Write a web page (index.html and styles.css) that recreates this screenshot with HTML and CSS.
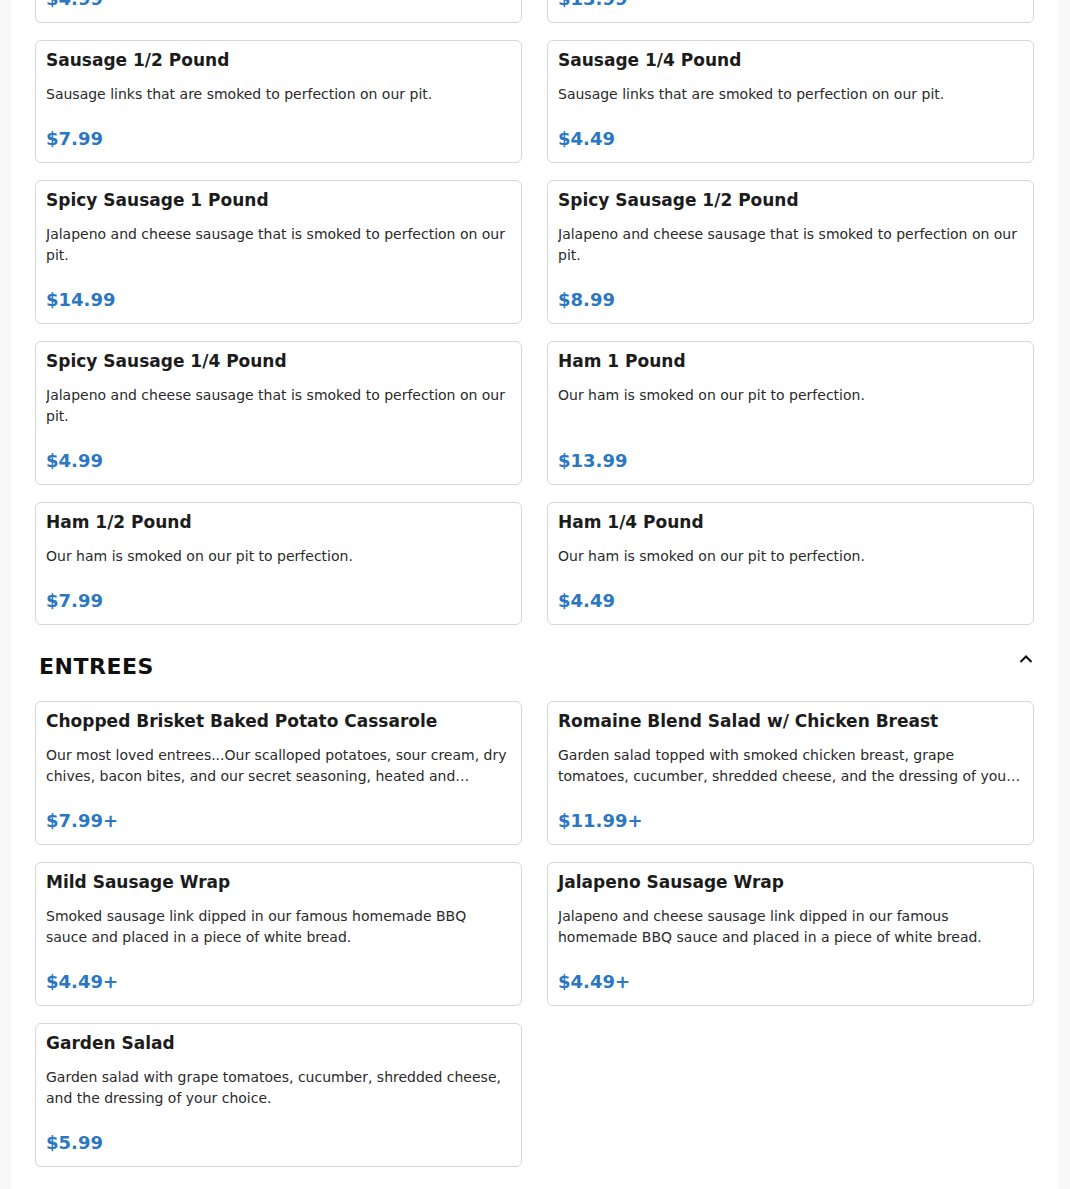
FILE: index.html
```html
<!DOCTYPE html>
<html lang="en">
<head>
<meta charset="utf-8">
<title>Menu</title>
<link rel="stylesheet" href="styles.css">
</head>
<body>
<main class="panel">
  <section class="section section-first">
    <div class="grid">
      <article class="card"><h3 class="card-title">Turkey 1/4 Pound</h3><p class="card-desc">Turkey breast smoked to perfection on our pit.</p><div class="card-price">$4.99</div></article>
      <article class="card"><h3 class="card-title">Sausage 1 Pound</h3><p class="card-desc">Sausage links that are smoked to perfection on our pit.</p><div class="card-price">$13.99</div></article>
      <article class="card"><h3 class="card-title">Sausage 1/2 Pound</h3><p class="card-desc">Sausage links that are smoked to perfection on our pit.</p><div class="card-price">$7.99</div></article>
      <article class="card"><h3 class="card-title">Sausage 1/4 Pound</h3><p class="card-desc">Sausage links that are smoked to perfection on our pit.</p><div class="card-price">$4.49</div></article>
      <article class="card"><h3 class="card-title">Spicy Sausage 1 Pound</h3><p class="card-desc">Jalapeno and cheese sausage that is smoked to perfection on our pit.</p><div class="card-price">$14.99</div></article>
      <article class="card"><h3 class="card-title">Spicy Sausage 1/2 Pound</h3><p class="card-desc">Jalapeno and cheese sausage that is smoked to perfection on our pit.</p><div class="card-price">$8.99</div></article>
      <article class="card"><h3 class="card-title">Spicy Sausage 1/4 Pound</h3><p class="card-desc">Jalapeno and cheese sausage that is smoked to perfection on our pit.</p><div class="card-price">$4.99</div></article>
      <article class="card"><h3 class="card-title">Ham 1 Pound</h3><p class="card-desc">Our ham is smoked on our pit to perfection.</p><div class="card-price">$13.99</div></article>
      <article class="card"><h3 class="card-title">Ham 1/2 Pound</h3><p class="card-desc">Our ham is smoked on our pit to perfection.</p><div class="card-price">$7.99</div></article>
      <article class="card"><h3 class="card-title">Ham 1/4 Pound</h3><p class="card-desc">Our ham is smoked on our pit to perfection.</p><div class="card-price">$4.49</div></article>
    </div>
  </section>

  <section class="section">
    <header class="section-head">
      <h2 class="section-title">ENTREES</h2>
      <svg class="chevron" width="14" height="10" viewBox="0 0 14 10" aria-hidden="true"><path d="M1.5 8 L7 2.5 L12.5 8" fill="none" stroke="#111" stroke-width="2"/></svg>
    </header>
    <div class="grid">
      <article class="card"><h3 class="card-title">Chopped Brisket Baked Potato Cassarole</h3><p class="card-desc">Our most loved entrees...Our scalloped potatoes, sour cream, dry chives, bacon bites, and our secret seasoning, heated and<br>topped with chopped brisket.</p><div class="card-price">$7.99+</div></article>
      <article class="card"><h3 class="card-title">Romaine Blend Salad w/ Chicken Breast</h3><p class="card-desc">Garden salad topped with smoked chicken breast, grape tomatoes, cucumber, shredded cheese, and the dressing of your choice.</p><div class="card-price">$11.99+</div></article>
      <article class="card"><h3 class="card-title">Mild Sausage Wrap</h3><p class="card-desc">Smoked sausage link dipped in our famous homemade BBQ sauce and placed in a piece of white bread.</p><div class="card-price">$4.49+</div></article>
      <article class="card"><h3 class="card-title">Jalapeno Sausage Wrap</h3><p class="card-desc">Jalapeno and cheese sausage link dipped in our famous homemade BBQ sauce and placed in a piece of white bread.</p><div class="card-price">$4.49+</div></article>
      <article class="card"><h3 class="card-title">Garden Salad</h3><p class="card-desc">Garden salad with grape tomatoes, cucumber, shredded cheese, and the dressing of your choice.</p><div class="card-price">$5.99</div></article>
    </div>
  </section>
</main>
</body>
</html>
```

FILE: styles.css
```css
html, body {
  margin: 0;
  padding: 0;
}
body {
  background: #f8f8f8;
  font-family: "DejaVu Sans", Verdana, sans-serif;
  color: #222;
  overflow: hidden;
}
.panel {
  width: 1048px;
  margin: 0 auto 0 11px;
  background: #fff;
  padding: 0 25px 40px 24px;
  box-sizing: border-box;
  min-height: 1189px;
}
.section-first {
  margin-top: -100px;
}
.grid {
  display: grid;
  grid-template-columns: 1fr 1fr;
  column-gap: 25px;
  row-gap: 17px;
}
.card {
  border: 1px solid #d6d6d6;
  border-radius: 6px;
  padding: 9px 10px 12px;
  display: flex;
  flex-direction: column;
  min-width: 0;
}
.card-title {
  margin: 0;
  font-size: 17px;
  line-height: 20px;
  font-weight: bold;
  color: #1c1c1c;
}
.card-desc {
  margin: 14px 0 0;
  font-size: 14px;
  line-height: 21px;
  color: #2a2a2a;
  display: -webkit-box;
  -webkit-box-orient: vertical;
  -webkit-line-clamp: 2;
  overflow: hidden;
}
.card-price {
  margin-top: auto;
  padding-top: 23px;
  font-size: 18px;
  line-height: 22px;
  font-weight: bold;
  color: #2b77c2;
}
.section-head {
  display: flex;
  align-items: flex-start;
  justify-content: space-between;
  margin: 28px 0 20px;
  padding-left: 4px;
}
.section-title {
  margin: 0;
  font-size: 22px;
  line-height: 28px;
  font-weight: bold;
  color: #111;
  letter-spacing: 0.5px;
}
.chevron {
  margin-top: 1px;
  margin-right: 1px;
}
```
